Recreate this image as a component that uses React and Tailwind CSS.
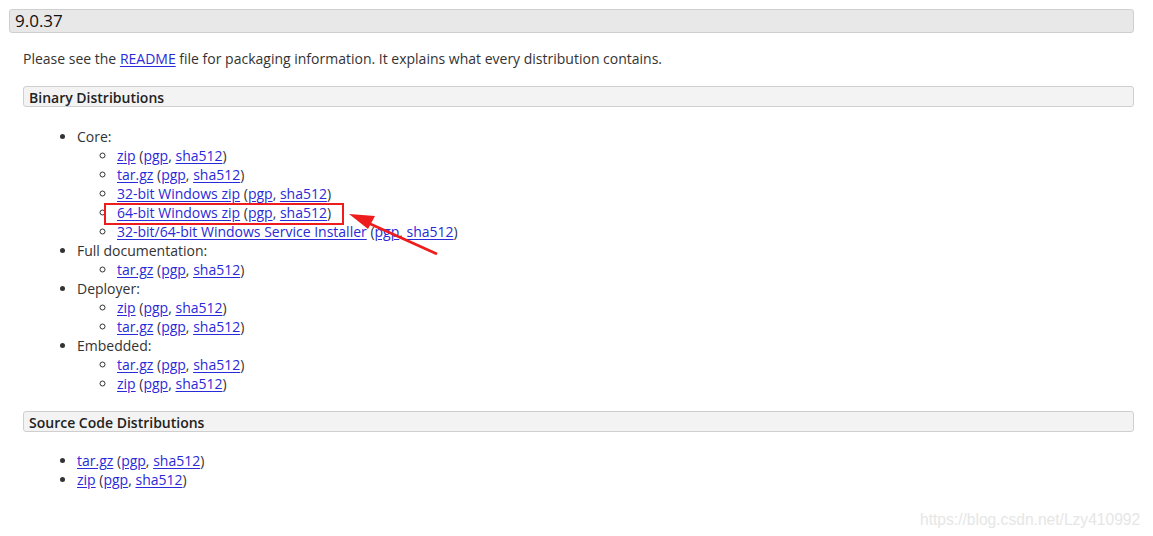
import React from 'react'

const link = "text-[#2a2ad8] underline underline-offset-2"

const Sums = () => (
  <>
    {" "}(<a className={link}>pgp</a>, <a className={link}>sha512</a>)
  </>
)

const Item = ({ label }) => (
  <li className="h-[19px]">
    <a className={link}>{label}</a>
    <Sums />
  </li>
)

const groups = [
  { name: "Core:", items: ["zip", "tar.gz", "32-bit Windows zip", "64-bit Windows zip", "32-bit/64-bit Windows Service Installer"] },
  { name: "Full documentation:", items: ["tar.gz"] },
  { name: "Deployer:", items: ["zip", "tar.gz"] },
  { name: "Embedded:", items: ["tar.gz", "zip"] },
]

const Box = ({ children }) => (
  <div className="ml-[23px] mr-[19px] h-[21px] rounded-[3px] border border-[#cfcfcf] bg-[#f3f3f3] pl-[5px] pt-[1px] text-[14px] leading-[19px] font-semibold text-[#222]">
    {children}
  </div>
)

const App = () => {
  return (
    <div className="relative w-[1153px] h-[536px] bg-white overflow-hidden text-[14px] text-[#333]" style={{ fontFamily: '"Open Sans", sans-serif' }}>
      <div className="pt-[9px]">
        <div className="ml-[9px] mr-[19px] h-[24px] rounded-[3px] border border-[#cfcfcf] bg-[#e8e8e8] pl-[5px] text-[17px] leading-[22px] font-medium text-[#111]">
          9.0.37
        </div>
      </div>

      <p className="ml-[23px] mt-[16px] leading-[19px]">
        Please see the <a className={link}>README</a> file for packaging information. It explains what every distribution contains.
      </p>

      <div className="mt-[18px]">
        <Box>Binary Distributions</Box>
      </div>

      <ul className="mt-[20px] ml-[77px] list-disc leading-[19px]">
        {groups.map((g) => (
          <li key={g.name}>
            {g.name}
            <ul className="ml-[40px] list-[circle]">
              {g.items.map((it, i) => (
                <Item key={i} label={it} />
              ))}
            </ul>
          </li>
        ))}
      </ul>

      <div className="mt-[18px]">
        <Box>Source Code Distributions</Box>
      </div>

      <ul className="mt-[19px] ml-[77px] list-disc leading-[19px]">
        <Item label="tar.gz" />
        <Item label="zip" />
      </ul>

      {/* highlight box */}
      <div className="absolute left-[104px] top-[203px] w-[240px] h-[22px] border-2 border-[#ee1c1c]" />

      {/* arrow */}
      <svg className="absolute left-0 top-0" width="1153" height="536">
        <line x1="437" y1="254" x2="366" y2="222" stroke="#ee1c1c" strokeWidth="2.5" />
        <polygon points="349,214 375,216 368,229" fill="#ee1c1c" />
      </svg>

      <div className="absolute left-[920px] top-[508px] text-[15.6px] text-[#e6e6e6]" style={{ fontFamily: '"Liberation Sans", Arial, sans-serif' }}>
        https://blog.csdn.net/Lzy410992
      </div>
    </div>
  )
}

export default App
